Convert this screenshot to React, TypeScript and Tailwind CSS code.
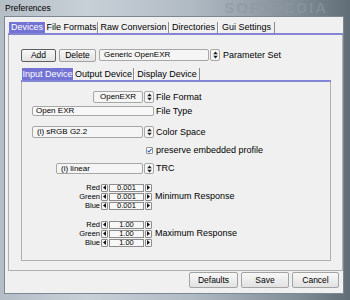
import React from "react";

function UpDown() {
  return (
    <svg width="5" height="8" viewBox="0 0 5 8">
      <path d="M2.5 0.5 L4.8 3.3 H0.2 Z M2.5 7.5 L4.8 4.7 H0.2 Z" fill="#1e1e1e" />
    </svg>
  );
}

function Arrow({ dir }: { dir: "left" | "right" }) {
  return (
    <div className="w-[7px] h-[8px] border border-[#8c8c8c] rounded-[1px] bg-[#f6f6f6] flex items-center justify-center">
      <svg width="3" height="5" viewBox="0 0 3 5">
        {dir === "left" ? (
          <path d="M0 2.5 L3 0 V5 Z" fill="#111" />
        ) : (
          <path d="M3 2.5 L0 0 V5 Z" fill="#111" />
        )}
      </svg>
    </div>
  );
}

function Combo({
  label,
  className,
  center,
}: {
  label: string;
  className: string;
  center?: boolean;
}) {
  return (
    <div className={`flex items-stretch ${className}`}>
      <div
        className={`flex-1 flex items-center border border-[#a7a7a7] rounded-[2px] bg-[#f5f5f5] text-[8px] leading-none ${
          center ? "justify-center" : "pl-[4px]"
        }`}
      >
        {label}
      </div>
      <div className="w-[10px] ml-[1px] border border-[#a7a7a7] rounded-[2px] bg-[#f5f5f5] flex items-center justify-center">
        <UpDown />
      </div>
    </div>
  );
}

function Tab({
  label,
  width,
  active,
}: {
  label: string;
  width: string;
  active?: boolean;
}) {
  return (
    <div
      className={`${width} h-full flex items-center justify-center text-[9px] leading-none ${
        active
          ? "bg-[#7373d4] text-white"
          : "text-black border-r border-[#8a8a8a] border-l border-l-white"
      }`}
    >
      {label}
    </div>
  );
}

function Spin({ label, value }: { label: string; value: string }) {
  return (
    <div className="h-[9px] flex items-center justify-end pr-[2px] text-[7.5px] leading-none">
      <span className="mr-[1px]">{label}</span>
      <Arrow dir="left" />
      <div className="w-[35px] h-[8px] mx-[1px] border border-[#8c8c8c] bg-[#f7f7f7] flex items-center justify-center">
        {value}
      </div>
      <Arrow dir="right" />
    </div>
  );
}

function FormRow({
  label,
  className,
  children,
}: {
  label: string;
  className: string;
  children: React.ReactNode;
}) {
  return (
    <div className={`flex items-center ${className}`}>
      <div className="w-[132px] h-full flex justify-end items-center">{children}</div>
      <span className="ml-[2px] text-[9px] leading-none">{label}</span>
    </div>
  );
}

function SpinGroup({ label, values, className }: { label: string; values: string[]; className: string }) {
  return (
    <div className={`flex items-center ${className}`}>
      <div className="w-[132px] flex flex-col">
        <Spin label="Red" value={values[0]} />
        <Spin label="Green" value={values[1]} />
        <Spin label="Blue" value={values[2]} />
      </div>
      <span className="ml-[1px] text-[9px] leading-none">{label}</span>
    </div>
  );
}

function Button({ label, className }: { label: string; className: string }) {
  return (
    <div
      className={`flex items-center justify-center rounded-[2px] bg-[linear-gradient(#f8f8f8,#e2e2e2)] text-[8.5px] leading-none ${className}`}
    >
      {label}
    </div>
  );
}

export default function App() {
  return (
    <div className="relative w-[350px] h-[300px] flex flex-col pl-[4px] pr-[6px] pb-[6px] overflow-hidden font-['Liberation_Sans',Arial,sans-serif] text-black bg-[linear-gradient(90deg,#b4bdc6_0%,#c8d0d7_25%,#b0bac3_55%,#808c96_85%,#606c76_100%)]">
      <div className="absolute right-[22px] top-[0px] text-[15px] leading-none font-bold tracking-[2px] text-[#8d98a2]/60">
        SOFTPEDIA
      </div>
      <div className="relative h-[16px] pl-[1px] flex items-center text-[8.5px] leading-none">
        Preferences
      </div>
      <div className="relative flex-1 flex flex-col bg-[#f0f0f0] border border-[#7d8892]">
        <div className="mt-[5px] ml-[3px] flex flex-col">
          <div className="h-[11px] flex pl-[1px]">
            <Tab label="Devices" width="w-[36px]" active />
            <Tab label="File Formats" width="w-[53px]" />
            <Tab label="Raw Conversion" width="w-[71px]" />
            <Tab label="Directories" width="w-[49px]" />
            <Tab label="Gui Settings" width="w-[57px]" />
          </div>
          <div className="h-[2px] bg-[#8585d6]" />
        </div>
        <div className="flex-1 ml-[3px] flex flex-col border-l border-r border-b border-[#b0b0b0]">
          <div className="mt-[14px] pl-[12px] h-[13px] flex items-stretch">
            <Button label="Add" className="w-[35px] border border-[#5e5e5e]" />
            <Button label="Delete" className="w-[37px] ml-[3px] border border-[#a3a3a3]" />
            <Combo label="Generic OpenEXR" className="w-[121px] ml-[3px] h-[12px]" />
            <span className="ml-[3px] self-center text-[9px] leading-none">Parameter Set</span>
          </div>
          <div className="mt-[6px] ml-[12px] mr-[11px] flex flex-col">
            <div className="h-[12px] flex pl-[1px]">
              <Tab label="Input Device" width="w-[51px]" active />
              <Tab label="Output Device" width="w-[61px]" />
              <Tab label="Display Device" width="w-[66px]" />
            </div>
            <div className="h-[2px] bg-[#8585d6]" />
          </div>
          <div className="flex-1 ml-[12px] mr-[11px] mb-[9px] flex flex-col border-l border-r border-b border-[#b0b0b0]">
            <FormRow label="File Format" className="mt-[9px] h-[12px]">
              <Combo label="OpenEXR" className="w-[61px] h-[12px]" center />
            </FormRow>
            <FormRow label="File Type" className="mt-[3px] h-[10px]">
              <div className="w-[122px] h-[10px] border border-[#a7a7a7] rounded-[2px] bg-[#f7f7f7] pl-[3px] flex items-center text-[8px] leading-none">
                Open EXR
              </div>
            </FormRow>
            <FormRow label="Color Space" className="mt-[10px] h-[12px]">
              <Combo label="(i) sRGB G2.2" className="w-[122px] h-[12px]" />
            </FormRow>
            <FormRow label="preserve embedded profile" className="mt-[8px] h-[8px]">
              <div className="w-[7px] h-[7px] mr-[1px] border border-[#8e8f8f] rounded-[1px] bg-white flex items-center justify-center">
                <svg width="5" height="5" viewBox="0 0 5 5">
                  <path d="M0.6 2.6 L2 4 L4.5 0.8" stroke="#2a62c9" strokeWidth="1.1" fill="none" />
                </svg>
              </div>
            </FormRow>
            <FormRow label="TRC" className="mt-[9px] h-[11px]">
              <Combo label="(i) linear" className="w-[98px] h-[11px]" />
            </FormRow>
            <SpinGroup
              label="Minimum Response"
              values={["0.001", "0.001", "0.001"]}
              className="mt-[9px]"
            />
            <SpinGroup
              label="Maximum Response"
              values={["1.00", "1.00", "1.00"]}
              className="mt-[10px]"
            />
          </div>
        </div>
        <div className="h-[22px] flex items-start justify-end pt-[1px] pr-[4px] gap-[3px]">
          <Button label="Defaults" className="w-[49px] h-[16px] border border-[#a3a3a3]" />
          <Button label="Save" className="w-[48px] h-[16px] border border-[#a3a3a3]" />
          <Button label="Cancel" className="w-[47px] h-[16px] border border-[#a3a3a3]" />
        </div>
      </div>
    </div>
  );
}
